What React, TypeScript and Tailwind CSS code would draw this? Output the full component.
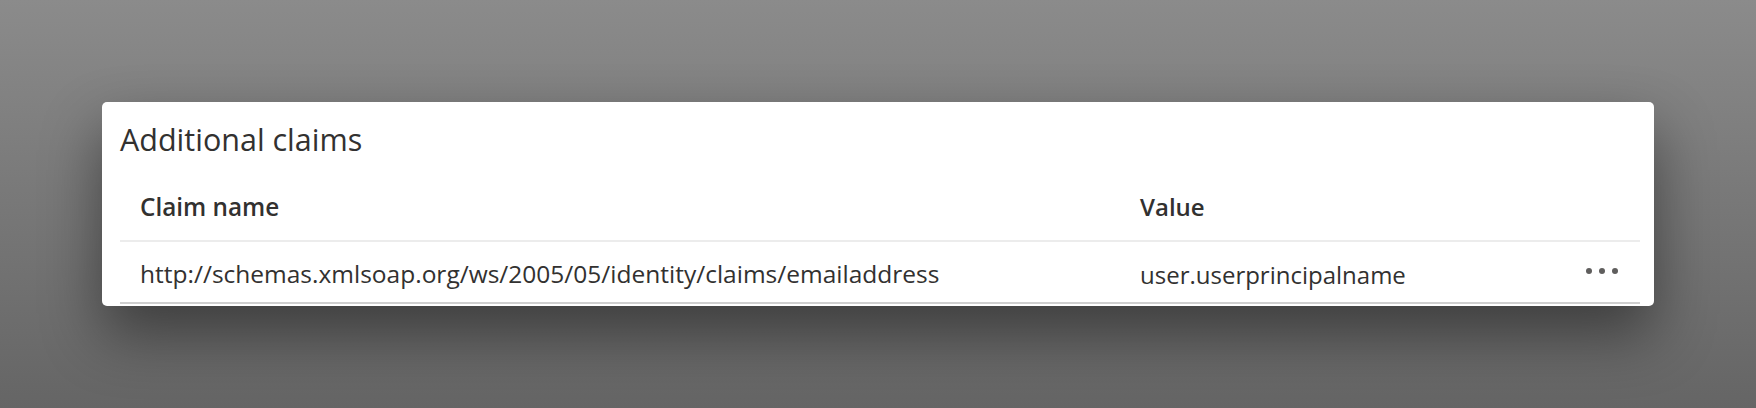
const claims = [
  {
    name: "http://schemas.xmlsoap.org/ws/2005/05/identity/claims/emailaddress",
    value: "user.userprincipalname",
  },
];

function DotsIcon() {
  return (
    <svg width="34" height="8" viewBox="0 0 34 8" aria-hidden>
      <circle cx="4" cy="4" r="3" fill="#5f5e5d" />
      <circle cx="17" cy="4" r="3" fill="#5f5e5d" />
      <circle cx="30" cy="4" r="3" fill="#5f5e5d" />
    </svg>
  );
}

export default function App() {
  return (
    <div
      className="h-[408px] w-full overflow-hidden bg-gradient-to-b from-[#8b8b8b] to-[#656565] pt-[102px] px-[102px]"
      style={{ fontFamily: '"Open Sans", "Noto Sans", sans-serif' }}
    >
      <div className="h-[204px] overflow-hidden rounded-[5px] bg-white pl-[18px] pr-[14px] text-[#323130] shadow-[0_28px_60px_rgba(0,0,0,0.45)]">
        <h2 className="pt-[17px] text-[30.5px] leading-[40px] font-normal">Additional claims</h2>

        <div className="mt-[18px]">
          <div className="grid grid-cols-[1000px_1fr_60px] border-b-2 border-[#ececec] h-[65px] items-center pb-[3px]">
            <div className="pl-5 text-[24.3px] font-semibold">Claim name</div>
            <div className="pl-5 text-[24px] font-semibold">Value</div>
            <div />
          </div>
          {claims.map((c) => (
            <div
              key={c.name}
              className="grid grid-cols-[1000px_1fr_60px] border-b-2 border-[#cfcfcf] h-[62px] items-center pt-[5px]"
            >
              <div className="pl-5 text-[24.5px]">{c.name}</div>
              <div className="pl-5 text-[24px]">{c.value}</div>
              <div className="flex justify-start pl-[5px] -mt-[8px]">
                <DotsIcon />
              </div>
            </div>
          ))}
        </div>
      </div>
    </div>
  );
}
